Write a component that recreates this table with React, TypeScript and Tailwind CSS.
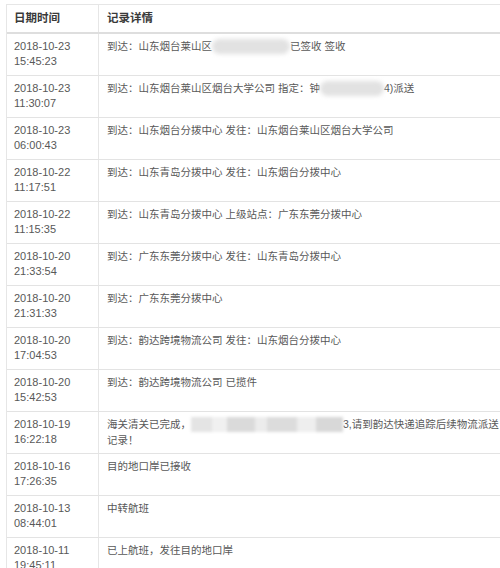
import React from "react";

const Blur = ({ w, segmented }: { w: number; segmented?: boolean }) => (
  <span
    className="inline-block align-middle relative -top-[1px] h-[15px]"
    style={{ width: w }}
  >
    {segmented ? (
      <span className="flex h-full w-full blur-[1.5px]">
        <span className="h-full w-[14%] bg-[#e4e4e4]" />
        <span className="h-full w-[10%] bg-[#f0f0f0]" />
        <span className="h-full w-[18%] bg-[#dadada]" />
        <span className="h-full w-[8%] bg-[#ececec]" />
        <span className="h-full w-[20%] bg-[#dcdcdc]" />
        <span className="h-full w-[12%] bg-[#eeeeee]" />
        <span className="h-full w-[18%] bg-[#d8d8d8]" />
      </span>
    ) : (
      <span className="block h-full w-full rounded-full bg-[#e2e2e2] blur-[2px]" />
    )}
  </span>
);

type Row = { d: string; t: string; detail: React.ReactNode };

const rows: Row[] = [
  {
    d: "2018-10-23",
    t: "15:45:23",
    detail: (
      <>
        到达：山东烟台莱山区
        <Blur w={78} />
        已签收 签收
      </>
    ),
  },
  {
    d: "2018-10-23",
    t: "11:30:07",
    detail: (
      <>
        到达：山东烟台莱山区烟台大学公司 指定：钟
        <Blur w={64} />
        4)派送
      </>
    ),
  },
  { d: "2018-10-23", t: "06:00:43", detail: "到达：山东烟台分拨中心 发往：山东烟台莱山区烟台大学公司" },
  { d: "2018-10-22", t: "11:17:51", detail: "到达：山东青岛分拨中心 发往：山东烟台分拨中心" },
  { d: "2018-10-22", t: "11:15:35", detail: "到达：山东青岛分拨中心 上级站点：广东东莞分拨中心" },
  { d: "2018-10-20", t: "21:33:54", detail: "到达：广东东莞分拨中心 发往：山东青岛分拨中心" },
  { d: "2018-10-20", t: "21:31:33", detail: "到达：广东东莞分拨中心" },
  { d: "2018-10-20", t: "17:04:53", detail: "到达：韵达跨境物流公司 发往：山东烟台分拨中心" },
  { d: "2018-10-20", t: "15:42:53", detail: "到达：韵达跨境物流公司 已揽件" },
  {
    d: "2018-10-19",
    t: "16:22:18",
    detail: (
      <>
        海关清关已完成，
        <Blur w={152} segmented />
        3,请到韵达快递追踪后续物流派送
        <br />
        记录！
      </>
    ),
  },
  { d: "2018-10-16", t: "17:26:35", detail: "目的地口岸已接收" },
  { d: "2018-10-13", t: "08:44:01", detail: "中转航班" },
  { d: "2018-10-11", t: "19:45:11", detail: "已上航班，发往目的地口岸" },
];

export default function App() {
  return (
    <div
      className="w-[500px] h-[568px] overflow-hidden bg-white pl-[6px] pt-[4px]"
      style={{ fontFamily: '"Liberation Sans", "Noto Sans CJK SC", sans-serif' }}
    >
      <div className="w-[520px] border-t border-l border-[#e6e6e6]">
        <div className="flex h-[29px] border-b-2 border-[#dedede] text-[11.5px] font-bold text-[#3a3a3a]">
          <div className="w-[92px] shrink-0 border-r border-[#e6e6e6] pl-[7px] flex items-center">
            日期时间
          </div>
          <div className="flex-1 pl-[8px] flex items-center">记录详情</div>
        </div>
        {rows.map((r, i) => (
          <div
            key={i}
            className="flex h-[42px] border-b border-[#e3e3e3] leading-[15px] text-[#585858]"
          >
            <div className="w-[92px] shrink-0 border-r border-[#e6e6e6] pl-[7px] pt-[5px] text-[11px]">
              <div>{r.d}</div>
              <div>{r.t}</div>
            </div>
            <div className="flex-1 pl-[8px] pt-[5px] whitespace-nowrap text-[10.5px]">{r.detail}</div>
          </div>
        ))}
      </div>
    </div>
  );
}
